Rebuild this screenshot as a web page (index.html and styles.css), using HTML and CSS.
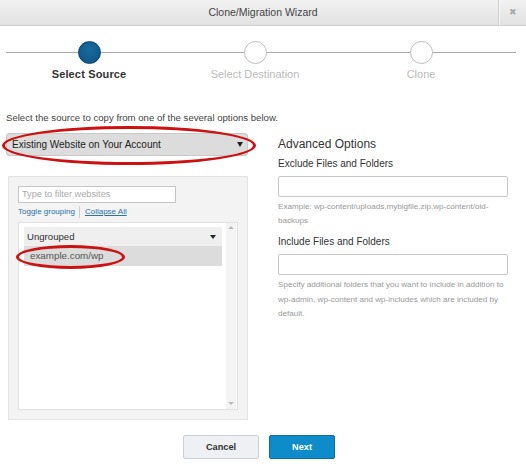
FILE: index.html
```html
<!DOCTYPE html>
<html>
<head>
<meta charset="utf-8">
<link rel="stylesheet" href="styles.css">
</head>
<body>
<div class="dialog">
  <div class="titlebar">
    <div class="title">Clone/Migration Wizard</div>
    <div class="close">&#x2716;</div>
  </div>
  <div class="steps">
    <div class="step active"><div class="dot"></div><div class="label">Select Source</div></div>
    <div class="step"><div class="dot"></div><div class="label">Select Destination</div></div>
    <div class="step"><div class="dot"></div><div class="label">Clone</div></div>
  </div>
  <p class="intro">Select the source to copy from one of the several options below.</p>
  <div class="main">
    <div class="left">
      <div class="select">Existing Website on Your Account<span class="caret"></span><span class="ring ring-select"></span></div>
      <div class="panel">
        <div class="filter">Type to filter websites</div>
        <div class="links"><span class="link">Toggle grouping</span><span class="sep"></span><span class="link u">Collapse All</span></div>
        <div class="list">
          <div class="items">
            <div class="group">Ungrouped<span class="caret small"></span></div>
            <div class="item">example.com/wp<span class="ring ring-item"></span></div>
          </div>
          <div class="scroll"><span class="arr up"></span><span class="arr down"></span></div>
        </div>
      </div>
    </div>
    <div class="right">
      <div class="adv">Advanced Options</div>
      <div class="flabel">Exclude Files and Folders</div>
      <div class="input"></div>
      <div class="help">Example: wp-content/uploads,mybigfile.zip,wp-content/old-backups</div>
      <div class="flabel second">Include Files and Folders</div>
      <div class="input"></div>
      <div class="help help2">Specify additional folders that you want to include in addition to wp-admin, wp-content and wp-includes which are included by default.</div>
    </div>
  </div>
  <div class="buttons">
    <div class="btn cancel">Cancel</div>
    <div class="btn next">Next</div>
  </div>
</div>
</body>
</html>
```

FILE: styles.css
```css
* { box-sizing: border-box; }
html, body { margin: 0; padding: 0; background: #fff; }
body { font-family: "Liberation Sans", Arial, sans-serif; color: #333; width: 526px; height: 470px; overflow: hidden; }

.titlebar {
  height: 26px;
  display: flex;
  background: linear-gradient(#f2f2f2, #e2e2e2);
  border-bottom: 1px solid #cfcfcf;
}
.title {
  flex: 1;
  text-align: center;
  font-size: 10.5px;
  line-height: 25px;
  color: #444;
  padding-left: 28px;
}
.close {
  width: 28px;
  border-left: 1px solid #d0d0d0;
  box-shadow: inset 1px 0 0 #f6f6f6;
  text-align: center;
  font-size: 9px;
  line-height: 25px;
  color: #aaa;
}

.steps {
  margin-left: 6px;
  width: 510px;
  padding-top: 15px;
  display: grid;
  grid-template-columns: 166px 166px 166px;
  background: linear-gradient(#aaa, #aaa) no-repeat 0 26px / 100% 1px;
}
.step { display: flex; flex-direction: column; align-items: center; }
.dot {
  width: 23px; height: 23px;
  border-radius: 50%;
  border: 1px solid #bdbdbd;
  background: #fff;
}
.step.active .dot {
  background: radial-gradient(circle at 50% 35%, #1a6b9e, #0d5184);
  border-color: #0b4470;
}
.label {
  margin-top: 4px;
  font-size: 11px;
  line-height: 13px;
  color: #bbb;
}
.step.active .label { color: #333; font-weight: bold; letter-spacing: 0.15px; }

.intro {
  margin: 30px 0 0 6px;
  font-size: 9.6px;
  line-height: 13px;
  color: #444;
}

.main { display: flex; margin-top: 9px; }
.left { width: 248px; padding-left: 6px; }
.select {
  position: relative;
  height: 23px;
  background: #dcdcdc;
  border: 1px solid #c9c9c9;
  border-radius: 3px;
  font-size: 10px;
  line-height: 21px;
  padding-left: 5px;
  color: #222;
}
.caret {
  position: absolute;
  right: 4px; top: 8px;
  width: 0; height: 0;
  border-left: 3px solid transparent;
  border-right: 3px solid transparent;
  border-top: 5px solid #222;
}
.ring {
  position: absolute;
  border: 3px solid #cc1111;
  border-radius: 50%;
  pointer-events: none;
}
.ring-select { left: -5px; top: -8px; width: 254px; height: 39px; }

.panel {
  margin-top: 20px;
  margin-left: 2px;
  width: 240px;
  height: 244px;
  background: #f3f3f3;
  border: 1px solid #e4e4e4;
  padding: 9px;
}
.filter {
  width: 158px; height: 17px;
  background: #fff;
  border: 1px solid #c6c6c6;
  font-size: 9.2px;
  line-height: 15px;
  padding-left: 3px;
  color: #aaa;
}
.links {
  margin-top: 3px;
  display: flex;
  align-items: center;
  height: 12px;
  font-size: 8px;
  line-height: 12px;
}
.link { color: #2a72ab; }
.link.u { text-decoration: underline; }
.sep { width: 1px; height: 12px; background: #ccc; margin: 0 5px 0 4px; }

.list {
  margin-top: 4px;
  height: 188px;
  background: #fff;
  border: 1px solid #e2e2e2;
  display: flex;
}
.items { flex: 1; padding: 4px 0 0 5px; }
.group {
  position: relative;
  height: 19px;
  background: #efefef;
  font-size: 9.6px;
  line-height: 19px;
  padding-left: 3px;
  color: #333;
  width: 198px;
}
.caret.small { right: 6px; top: 8px; border-left-width: 3px; border-right-width: 3px; border-top: 4px solid #1a2a3a; }
.item {
  position: relative;
  height: 20px;
  background: #dcdcdc;
  font-size: 9.8px;
  line-height: 20px;
  padding-left: 6px;
  color: #555;
  width: 198px;
}
.ring-item { left: -8px; top: -1px; width: 109px; height: 24px; }

.scroll {
  width: 10px;
  margin-right: 1px;
  background: #f4f4f4;
  display: flex;
  flex-direction: column;
  justify-content: space-between;
  align-items: center;
  padding: 3px 0 4px;
}
.arr { width: 0; height: 0; border-left: 3px solid transparent; border-right: 3px solid transparent; }
.arr.up { border-bottom: 3px solid #bbb; }
.arr.down { border-top: 3px solid #bbb; }

.right { margin-left: 30px; width: 230px; }
.adv {
  margin-top: 3px;
  font-size: 12px;
  line-height: 17px;
  color: #333;
}
.flabel {
  margin-top: 4px;
  font-size: 10px;
  line-height: 13px;
  color: #333;
}
.flabel.second { margin-top: 7px; }
.input {
  margin-top: 6px;
  height: 21px;
  border: 1px solid #c8c8c8;
  border-radius: 2px;
  background: #fff;
}
.help {
  margin-top: 3px;
  font-size: 8.1px;
  line-height: 14px;
  color: #999;
}
.help2 { line-height: 14.5px; }

.buttons {
  margin-top: 15px;
  display: flex;
  justify-content: center;
  gap: 10px;
  padding-right: 8px;
}
.btn {
  height: 24px;
  border-radius: 2px;
  font-size: 9.2px;
  font-weight: bold;
  line-height: 22px;
  text-align: center;
}
.cancel { width: 76px; background: #eef0f3; border: 1px solid #c9d0d8; color: #333; }
.next { width: 66px; background: #0e8bc9; border: 1px solid #0a6fa3; color: #fff; }
```
